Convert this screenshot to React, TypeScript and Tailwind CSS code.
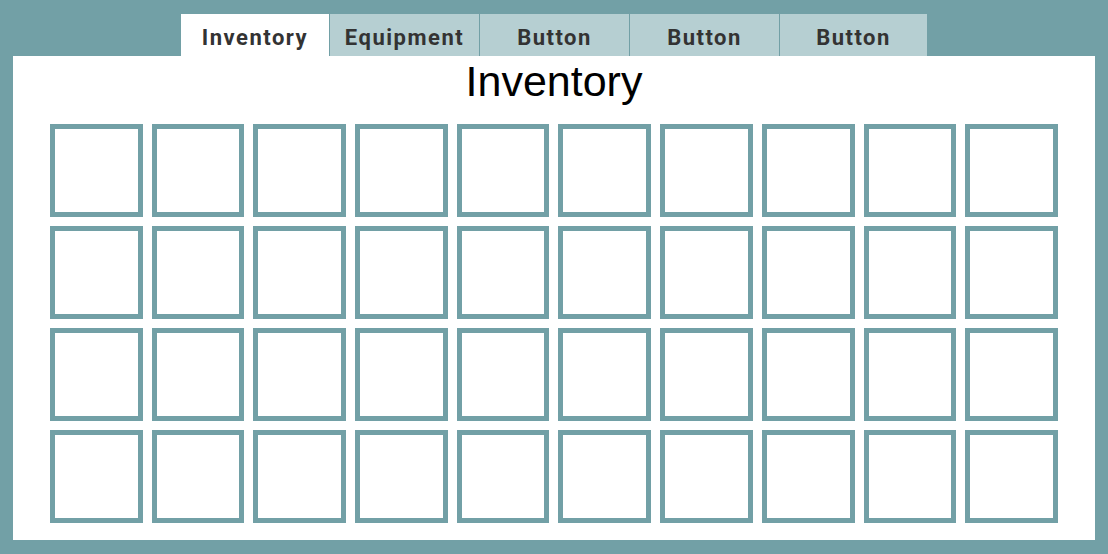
import React from "react";

const tabs = ["Inventory", "Equipment", "Button", "Button", "Button"];

export default function App() {
  const cells = Array.from({ length: 40 }, (_, i) => i);
  return (
    <div className="w-[1108px] h-[554px] bg-[#72a0a6] pt-[14px] px-[13px] pb-[14px] flex flex-col" style={{ fontFamily: '"Liberation Sans", Arial, sans-serif' }}>
      <div className="flex h-[42px] pl-[168px]">
        {tabs.map((t, i) => (
          <div
            key={i}
            className={
              i === 0
                ? "w-[148px] h-full bg-white flex items-center justify-center pt-[5px] text-[22px] font-bold tracking-[1.5px] text-[#333333]"
                : i === 4
                ? "w-[148px] h-full bg-[#b6cfd2] border-l border-[#72a0a6] flex items-center justify-center pt-[5px] text-[22px] font-bold tracking-[1.5px] text-[#333333]"
                : "w-[150px] h-full bg-[#b6cfd2] border-l border-[#72a0a6] flex items-center justify-center pt-[5px] text-[22px] font-bold tracking-[1.5px] text-[#333333]"
            }
            style={{ fontFamily: 'Roboto, "Liberation Sans", sans-serif' }}
          >
            {t}
          </div>
        ))}
      </div>
      <div className="flex-1 bg-white flex flex-col items-center px-[37px]">
        <div className="h-[48px] leading-[50px] text-[43px] text-black">Inventory</div>
        <div className="mt-[20px] w-full grid grid-cols-10 gap-x-[9px] gap-y-[9px]">
          {cells.map((c) => (
            <div key={c} className="h-[93px] border-[5px] border-[#72a0a6] bg-white" />
          ))}
        </div>
      </div>
    </div>
  );
}
